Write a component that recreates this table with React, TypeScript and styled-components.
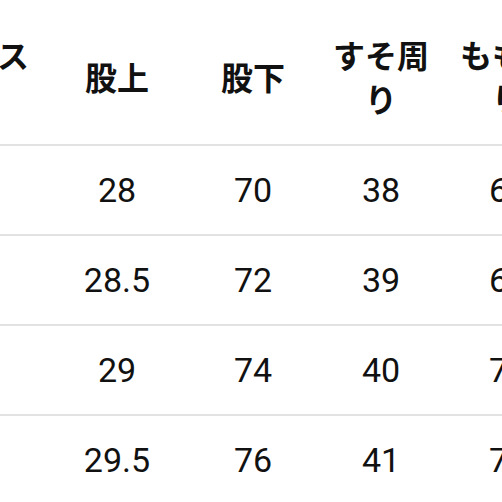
import React from 'react';
import styled, { createGlobalStyle } from 'styled-components';

const GlobalStyle = createGlobalStyle`
  html, body {
    margin: 0;
    padding: 0;
    background: #ffffff;
  }
  body {
    font-family: Roboto, "Noto Sans CJK JP", sans-serif;
    color: #1a1a1a;
  }
`;

const Viewport = styled.div`
  width: 502px;
  height: 502px;
  overflow: hidden;
  padding-top: 8px;
  box-sizing: border-box;
`;

const Table = styled.div`
  margin-left: -87px;
  display: flex;
  flex-direction: column;
`;

const COLS = '136px 136px 136px 120px 134px 134px';

const HeaderRow = styled.div`
  display: grid;
  grid-template-columns: ${COLS};
  height: 136px;
  border-bottom: 2px solid #e2e2e2;
`;

const BodyRow = styled.div`
  display: grid;
  grid-template-columns: ${COLS};
  height: 88px;
  border-bottom: 2px solid #e2e2e2;
`;

const HeadCell = styled.div`
  display: flex;
  align-items: center;
  justify-content: center;
  text-align: center;
  padding: 0 10px;
  font-family: "Noto Sans CJK JP", sans-serif;
  font-weight: 700;
  font-size: 32px;
  line-height: 44px;
  color: #111;
  word-break: break-all;
`;

const Cell = styled.div`
  display: flex;
  align-items: center;
  justify-content: center;
  font-family: Roboto, sans-serif;
  font-size: 34px;
  color: #111;
`;

const headers = ['ウエスト', '股上', '股下', 'すそ周り', 'もも周り', 'ヒップ'];

const rows = [
  ['72', '28', '70', '38', '60', '90'],
  ['76', '28.5', '72', '39', '62', '94'],
  ['80', '29', '74', '40', '70', '98'],
  ['84', '29.5', '76', '41', '72', '102'],
];

const App: React.FC = () => {
  return (
    <>
      <GlobalStyle />
      <Viewport>
        <Table>
          <HeaderRow>
            {headers.map((h) => (
              <HeadCell key={h}>{h}</HeadCell>
            ))}
          </HeaderRow>
          {rows.map((r, i) => (
            <BodyRow key={i}>
              {r.map((v, j) => (
                <Cell key={j}>{v}</Cell>
              ))}
            </BodyRow>
          ))}
        </Table>
      </Viewport>
    </>
  );
};

export default App;
